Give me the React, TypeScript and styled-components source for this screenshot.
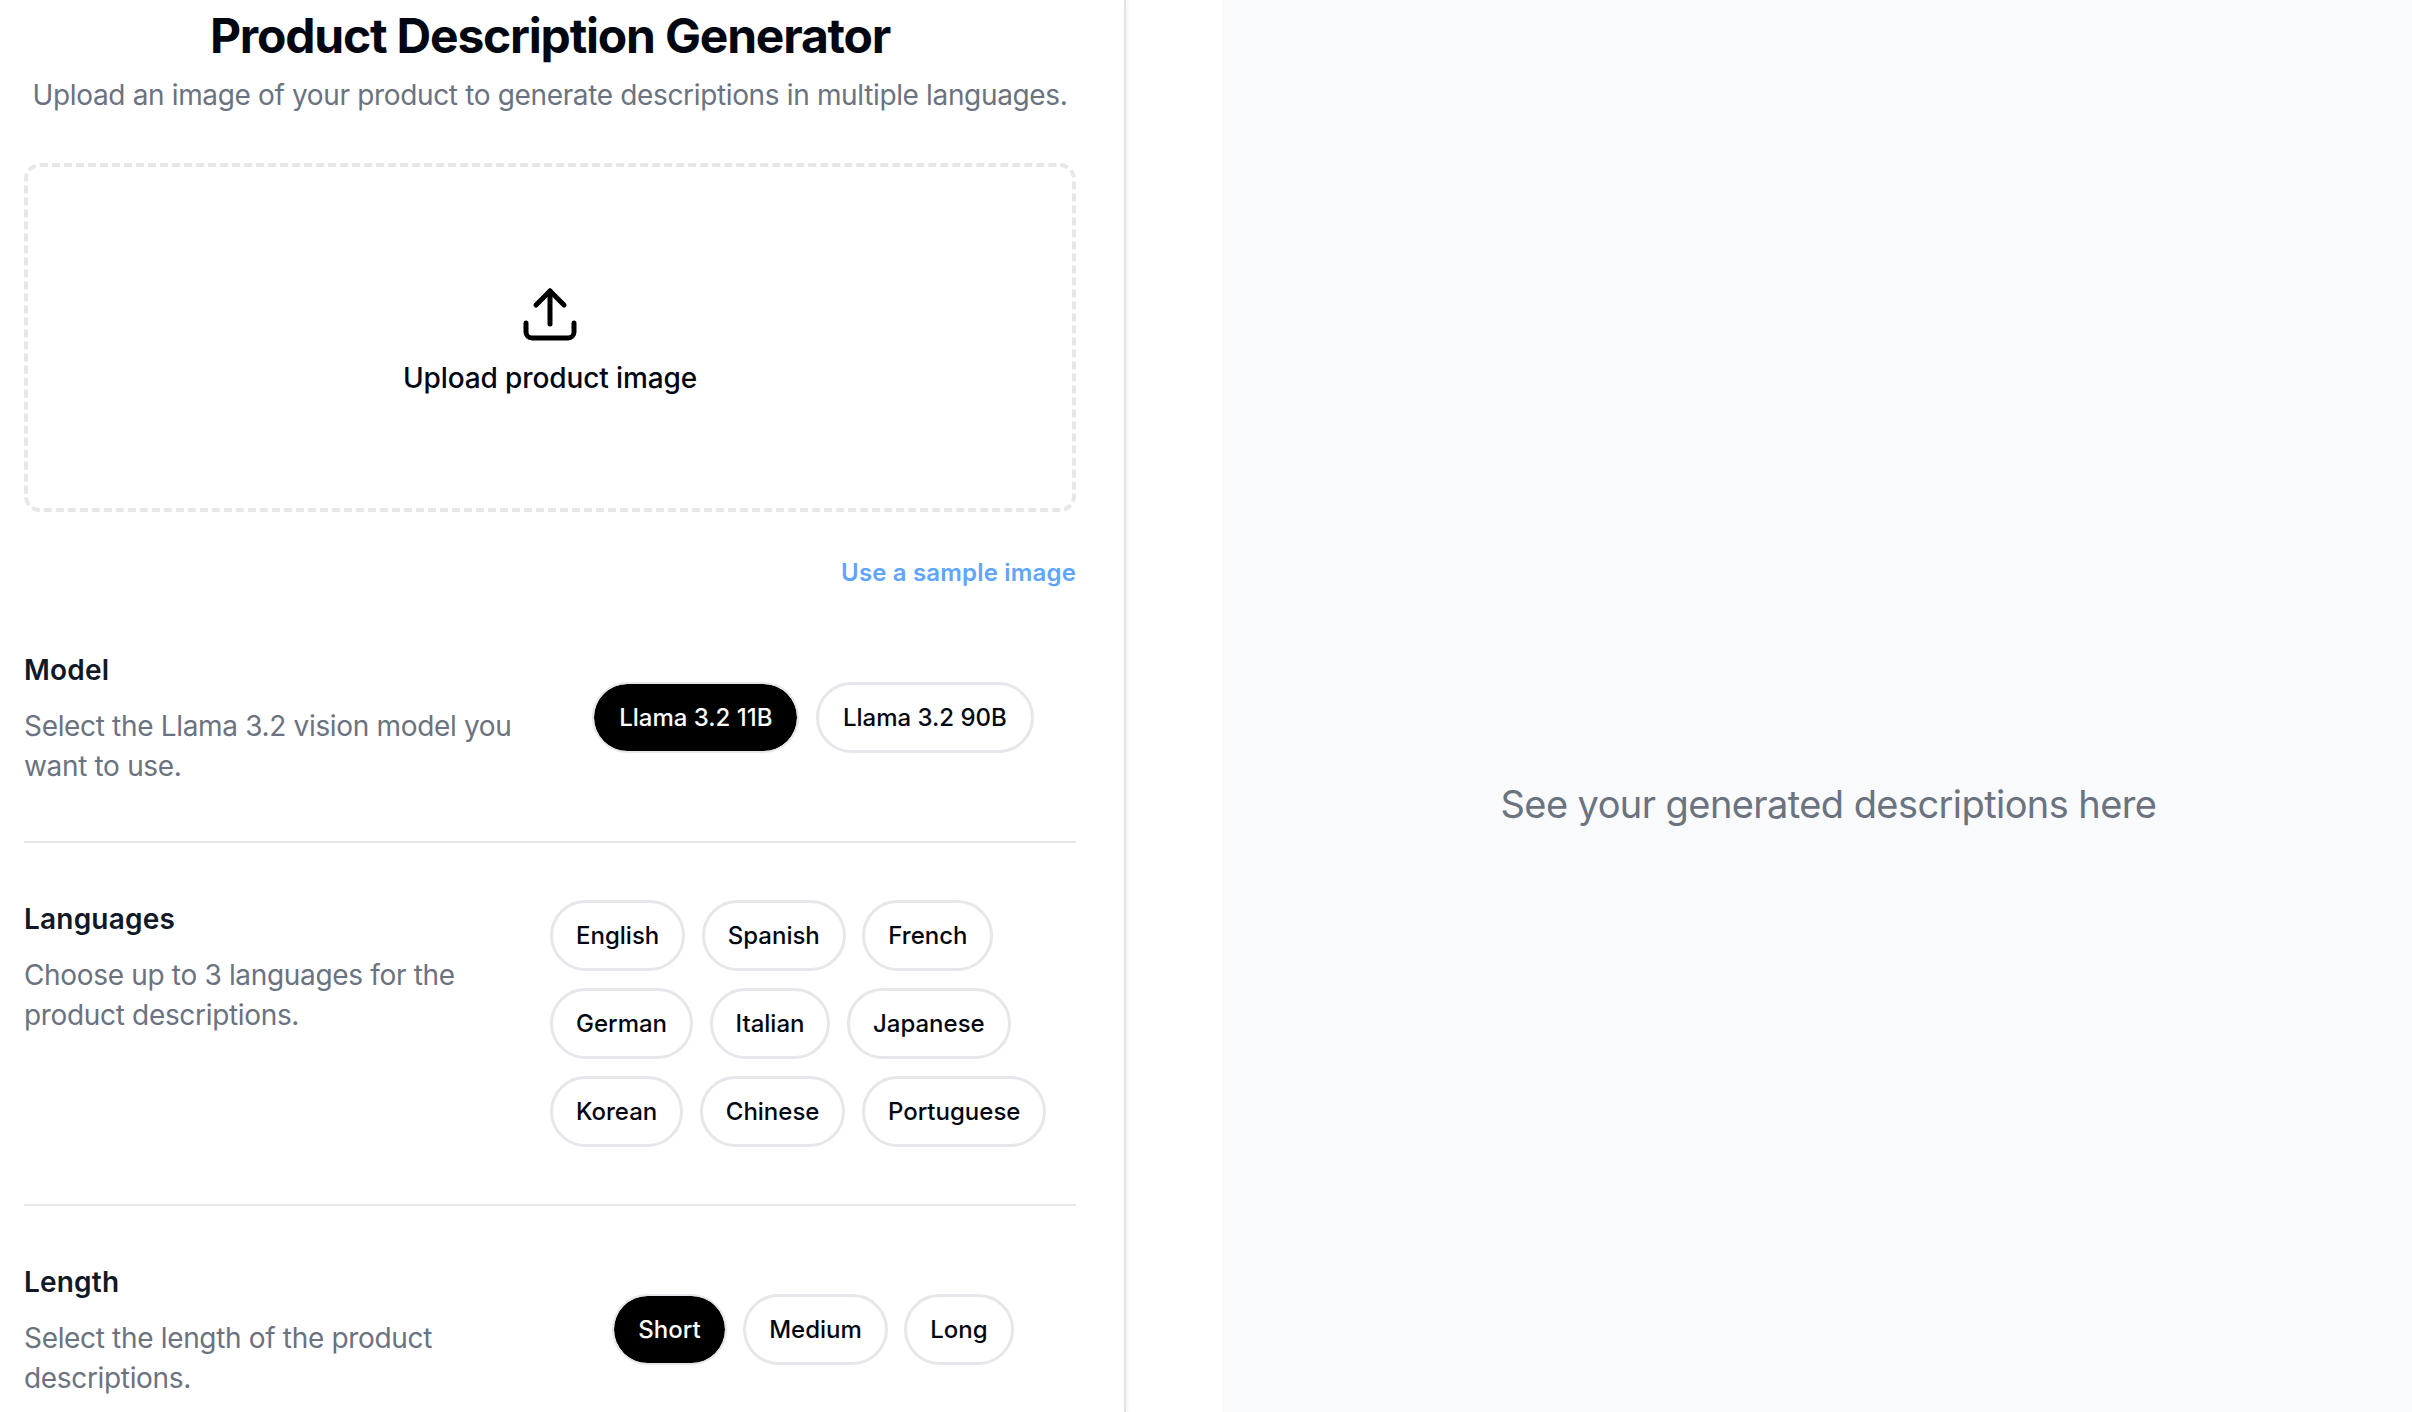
import styled, { createGlobalStyle } from "styled-components";

const GlobalStyle = createGlobalStyle`
    html, body {
        margin: 0;
        padding: 0;
        height: 100%;
        overflow: hidden;
        background: #fff;
    }
    * {
        box-sizing: border-box;
    }
`;

const Page = styled.div`
    display: flex;
    height: 1412px;
    overflow: hidden;
    font-family: Inter, "Liberation Sans", sans-serif;
    background: #fff;
`;

const LeftPanel = styled.div`
    flex: none;
    width: 1126px;
    height: 1412px;
    padding: 0 48px 0 24px;
    border-right: 2px solid #e2e3e5;
    box-shadow: 2px 0 3px rgba(0, 0, 0, 0.05);
`;

const Gutter = styled.div`
    flex: none;
    width: 96px;
`;

const RightPanel = styled.div`
    flex: 1;
    height: 1608px;
    padding-left: 23px;
    display: flex;
    align-items: center;
    justify-content: center;
    background: #f9fafb;
`;

const Placeholder = styled.p`
    margin: 0;
    font-size: 38px;
    line-height: 56px;
    letter-spacing: -0.58px;
    color: #6b7280;
`;

const Title = styled.h1`
    margin: 0;
    padding-top: 6px;
    text-align: center;
    font-size: 48px;
    line-height: 60px;
    font-weight: 700;
    letter-spacing: -1.2px;
    color: #030712;
`;

const Subtitle = styled.p`
    margin: 9px 0 0;
    text-align: center;
    font-size: 28px;
    line-height: 40px;
    letter-spacing: -0.35px;
    white-space: nowrap;
    color: #6b7280;
`;

const DropZone = styled.div`
    margin-top: 48px;
    height: 349px;
    padding-top: 9px;
    display: flex;
    flex-direction: column;
    align-items: center;
    justify-content: center;
    border: 4px dashed #e5e7eb;
    border-radius: 16px;
`;

const UploadIcon = styled.svg`
    display: block;
    width: 56px;
    height: 56px;
    color: #000;
`;

const UploadLabel = styled.span`
    margin-top: 15px;
    font-size: 28px;
    line-height: 40px;
    font-weight: 450;
    letter-spacing: -0.12px;
    color: #030712;
`;

const SampleRow = styled.div`
    margin-top: 41px;
    display: flex;
    justify-content: flex-end;
`;

const SampleLink = styled.a`
    font-size: 24px;
    line-height: 40px;
    font-weight: 600;
    letter-spacing: 0.17px;
    color: #60a5fa;
`;

const Section = styled.section<{ $top: number; $bottom: number }>`
    display: grid;
    grid-template-columns: 1fr 1fr;
    padding: ${(p) => p.$top}px 0 ${(p) => p.$bottom}px;
    & + & {
        border-top: 2px solid #e5e7eb;
    }
`;

const Info = styled.div`
    max-width: 500px;
`;

const Label = styled.h2`
    margin: 0;
    font-size: 28px;
    line-height: 40px;
    font-weight: 600;
    letter-spacing: 0.2px;
    color: #111827;
`;

const Description = styled.p`
    margin: 16px 0 0;
    font-size: 28px;
    line-height: 40px;
    letter-spacing: -0.33px;
    color: #6b7280;
`;

const Chips = styled.div<{ $center?: boolean }>`
    display: flex;
    flex-wrap: wrap;
    align-content: flex-start;
    gap: 17px 16.5px;
    justify-content: ${(p) => (p.$center ? "center" : "flex-start")};
    padding-top: ${(p) => (p.$center ? 32 : 1)}px;
`;

const Chip = styled.button<{ $active?: boolean; $pad?: number }>`
    height: 71px;
    padding: 0 ${(p) => (p.$pad ?? 23) + (p.$active ? 1 : 0)}px;
    font-family: inherit;
    font-size: 24px;
    font-weight: 450;
    color: ${(p) => (p.$active ? "#fff" : "#030712")};
    background: ${(p) => (p.$active ? "#000" : "#fff")};
    background-clip: padding-box;
    border: ${(p) => (p.$active ? 2 : 3)}px solid #e5e7eb;
    border-radius: 9999px;
`;

const models = ["Llama 3.2 11B", "Llama 3.2 90B"];
const languages = ["English", "Spanish", "French", "German", "Italian", "Japanese", "Korean", "Chinese", "Portuguese"];
const lengths = ["Short", "Medium", "Long"];

export default function App() {
    return (
        <Page>
            <GlobalStyle />
            <LeftPanel>
                <Title>Product Description Generator</Title>
                <Subtitle>Upload an image of your product to generate descriptions in multiple languages.</Subtitle>
                <DropZone>
                    <UploadIcon viewBox="0 0 56 56" fill="none" stroke="currentColor" strokeWidth="5" strokeLinecap="round" strokeLinejoin="round">
                        <path d="M14 18 L28 4 L42 18" />
                        <path d="M28 4 V37" />
                        <path d="M4 36 V45 A6 6 0 0 0 10 51 H46 A6 6 0 0 0 52 45 V36" />
                    </UploadIcon>
                    <UploadLabel>Upload product image</UploadLabel>
                </DropZone>
                <SampleRow>
                    <SampleLink>Use a sample image</SampleLink>
                </SampleRow>
                <Section $top={57} $bottom={55}>
                    <Info>
                        <Label>Model</Label>
                        <Description>Select the Llama 3.2 vision model you want to use.</Description>
                    </Info>
                    <Chips $center>
                        {models.map((m, i) => (
                            <Chip key={m} $active={i === 0} $pad={24}>{m}</Chip>
                        ))}
                    </Chips>
                </Section>
                <Section $top={56} $bottom={57}>
                    <Info>
                        <Label>Languages</Label>
                        <Description>Choose up to 3 languages for the product descriptions.</Description>
                    </Info>
                    <Chips>
                        {languages.map((l) => (
                            <Chip key={l}>{l}</Chip>
                        ))}
                    </Chips>
                </Section>
                <Section $top={56} $bottom={0}>
                    <Info>
                        <Label>Length</Label>
                        <Description>Select the length of the product descriptions.</Description>
                    </Info>
                    <Chips $center>
                        {lengths.map((l, i) => (
                            <Chip key={l} $active={i === 0}>{l}</Chip>
                        ))}
                    </Chips>
                </Section>
            </LeftPanel>
            <Gutter />
            <RightPanel>
                <Placeholder>See your generated descriptions here</Placeholder>
            </RightPanel>
        </Page>
    );
}
